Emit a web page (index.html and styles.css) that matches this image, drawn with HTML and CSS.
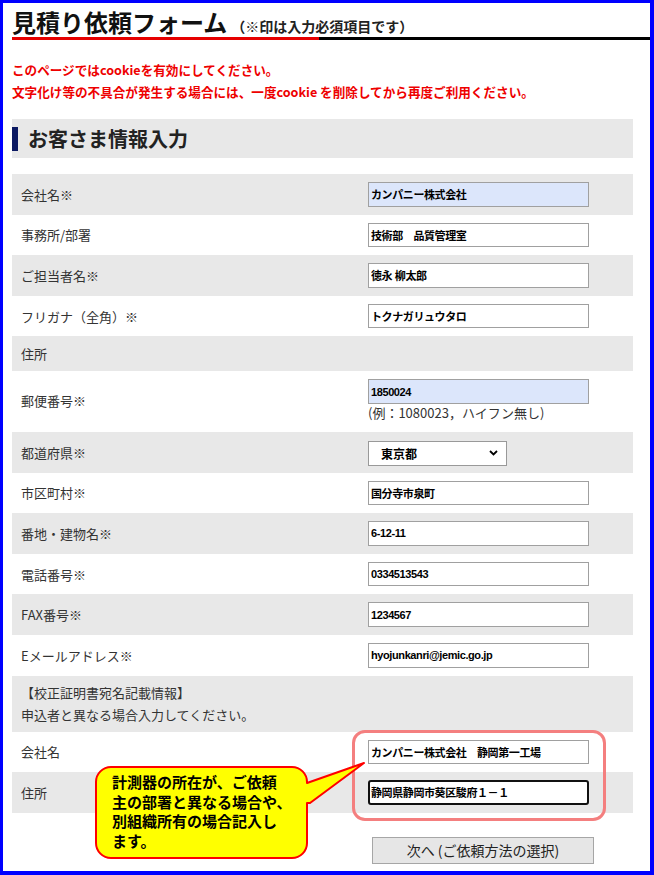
FILE: index.html
```html
<!DOCTYPE html>
<html lang="ja">
<head>
    <meta charset="UTF-8">
    <meta name="viewport" content="width=device-width, initial-scale=1.0">
    <title>見積り依頼フォーム</title>
    <link rel="stylesheet" href="styles.css">
</head>
<body>

    <div class="frame">
        <h1 class="page-title">見積り依頼フォーム<span class="title-note">（※印は入力必須項目です）</span></h1>

        <div class="notice">
            <p>このページではcookieを有効にしてください。</p>
            <p>文字化け等の不具合が発生する場合には、一度cookie を削除してから再度ご利用ください。</p>
        </div>

        <div class="section-head">
            <h2>お客さま情報入力</h2>
        </div>

        <form class="form">
            <div class="row">
                <label>会社名※</label>
                <input class="text-input autofill" value="カンパニー株式会社">
            </div>
            <div class="row">
                <label>事務所/部署</label>
                <input class="text-input" value="技術部　品質管理室">
            </div>
            <div class="row">
                <label>ご担当者名※</label>
                <input class="text-input" value="徳永 柳太郎">
            </div>
            <div class="row">
                <label>フリガナ（全角）※</label>
                <input class="text-input" value="トクナガリュウタロ">
            </div>
            <div class="row row-heading">
                <label>住所</label>
            </div>
            <div class="row row-zip">
                <label>郵便番号※</label>
                <div class="field">
                    <input class="text-input autofill" value="1850024">
                    <div class="hint">(例：1080023，ハイフン無し)</div>
                </div>
            </div>
            <div class="row">
                <label>都道府県※</label>
                <div class="select-wrap">
                    <select class="select">
                        <option>東京都</option>
                    </select>
                    <svg class="chevron" width="9" height="6" viewBox="0 0 9 6">
                        <path d="M1 1 L4.5 4.5 L8 1" fill="none" stroke="#000" stroke-width="1.8"/>
                    </svg>
                </div>
            </div>
            <div class="row">
                <label>市区町村※</label>
                <input class="text-input" value="国分寺市泉町">
            </div>
            <div class="row">
                <label>番地・建物名※</label>
                <input class="text-input" value="6-12-11">
            </div>
            <div class="row">
                <label>電話番号※</label>
                <input class="text-input" value="0334513543">
            </div>
            <div class="row">
                <label>FAX番号※</label>
                <input class="text-input" value="1234567">
            </div>
            <div class="row">
                <label>Eメールアドレス※</label>
                <input class="text-input" value="hyojunkanri@jemic.go.jp">
            </div>
            <div class="row row-info">
                <label>【校正証明書宛名記載情報】<br>申込者と異なる場合入力してください。</label>
            </div>
            <div class="row">
                <label>会社名</label>
                <input class="text-input" value="カンパニー株式会社　静岡第一工場">
            </div>
            <div class="row">
                <label>住所</label>
                <input class="text-input focused" value="静岡県静岡市葵区駿府１－１">
            </div>

            <div class="actions">
                <button type="button" class="next-button">次へ (ご依頼方法の選択)</button>
            </div>
        </form>

        <!-- annotation: highlight box and speech bubble -->
        <div class="highlight"></div>
        <svg class="bubble" width="280" height="110" viewBox="0 0 280 110">
            <path d="M21 12 H202 A15 15 0 0 1 217 27 V28 L274 8 L220 48 H217 V88 A15 15 0 0 1 202 103 H21 A15 15 0 0 1 6 88 V27 A15 15 0 0 1 21 12 Z"
                  fill="#ffff00" stroke="#ff0000" stroke-width="2" stroke-linejoin="round"/>
        </svg>
        <div class="bubble-text">計測器の所在が、ご依頼<br>主の部署と異なる場合や、<br>別組織所有の場合記入し<br>ます。</div>
    </div>

</body>
</html>
```

FILE: styles.css
```css
body {
    margin: 0;
    font-family: "Noto Sans CJK JP", "Noto Sans", sans-serif;
    color: #333;
    background: #fff;
}

.frame {
    position: relative;
    width: 654px;
    height: 875px;
    box-sizing: border-box;
    border-style: solid;
    border-color: #0000ff;
    border-width: 3px 4px 4px 3px;
    padding-left: 9px;
    overflow: hidden;
}

.page-title {
    display: flex;
    align-items: baseline;
    height: 30px;
    margin: 0;
    padding: 4px 0 3px;
    font-size: 24px;
    line-height: 30px;
    font-weight: bold;
    color: #111;
    background: linear-gradient(to right, #e60000 0, #e60000 307px, #000 307px) left bottom / 100% 3px no-repeat;
}

.title-note {
    margin-left: 4px;
    font-size: 14px;
    line-height: 14px;
    font-weight: bold;
    color: #222;
}

.notice {
    margin-top: 19px;
}

.notice p {
    margin: 0;
    font-size: 12.6px;
    line-height: 22px;
    font-weight: bold;
    color: #ee0000;
}

.section-head {
    width: 621px;
    height: 39px;
    margin-top: 16px;
    display: flex;
    align-items: center;
    background: #e8e8e8;
}

.section-head h2 {
    margin: 0;
    padding-left: 10px;
    border-left: 6px solid #0c1a63;
    font-size: 20px;
    line-height: 24px;
    font-weight: bold;
    color: #222;
}

.form {
    width: 621px;
    margin-top: 16px;
}

.row {
    display: grid;
    grid-template-columns: 356px 221px;
    align-items: center;
    padding: 8px 0;
}

.row:nth-of-type(odd) {
    background: #e8e8e8;
}

.row label {
    padding-left: 9px;
    font-size: 13px;
    color: #333;
}

.row-heading {
    height: 35px;
    padding: 0;
}

.row-zip {
    padding-bottom: 10px;
}

.row-info {
    padding: 6px 0;
}

.row-info label {
    line-height: 22px;
    grid-column: 1 / 3;
}

.text-input {
    display: block;
    width: 221px;
    height: 24.6px;
    box-sizing: border-box;
    margin: 0;
    padding: 0 2px;
    border: 1px solid #a0a0a0;
    background: #fff;
    color: #000;
    font: bold 11px "Liberation Sans", "Noto Sans CJK JP", sans-serif;
    letter-spacing: -0.4px;
    outline: none;
}

.autofill {
    background: #dce6fb;
}

.focused {
    border: 2px solid #111;
    border-radius: 3px;
    padding: 0 1px;
}

.hint {
    font-size: 13px;
    line-height: 18px;
    color: #333;
}

.select-wrap {
    position: relative;
    width: 139px;
    height: 24.6px;
}

.select {
    width: 100%;
    height: 100%;
    box-sizing: border-box;
    margin: 0;
    padding: 0 0 0 12px;
    border: 1px solid #999;
    border-radius: 0;
    background: #fff;
    color: #000;
    font: bold 12px "Noto Sans CJK JP", sans-serif;
    appearance: none;
    -webkit-appearance: none;
}

.chevron {
    position: absolute;
    right: 9px;
    top: 10px;
}

.actions {
    margin-top: 24px;
    padding-left: 360px;
}

.next-button {
    width: 222px;
    height: 27px;
    padding: 0;
    border: 1px solid #a6a6a6;
    background: #e6e6e6;
    color: #222;
    font: 14px "Noto Sans CJK JP", sans-serif;
}

.highlight {
    position: absolute;
    left: 349px;
    top: 727px;
    width: 254px;
    height: 91px;
    box-sizing: border-box;
    border: 3px solid #f47f7f;
    border-radius: 13px;
}

.bubble {
    position: absolute;
    left: 87px;
    top: 752px;
}

.bubble-text {
    position: absolute;
    left: 109px;
    top: 769px;
    font-size: 15px;
    line-height: 19.5px;
    font-weight: bold;
    color: #000;
    white-space: nowrap;
}
```
